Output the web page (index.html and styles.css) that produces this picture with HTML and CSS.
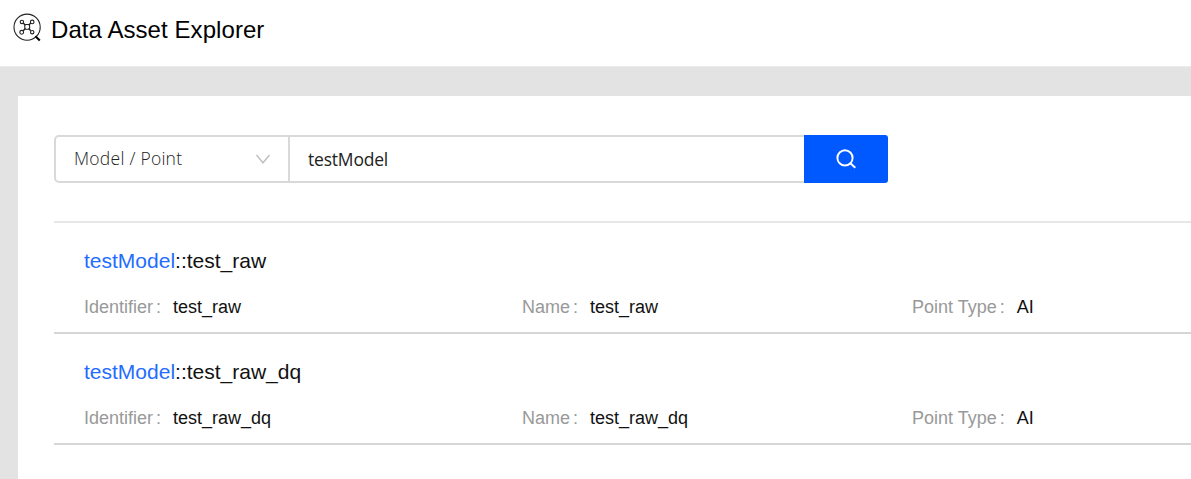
FILE: index.html
```html
<!DOCTYPE html>
<html lang="en">
<head>
<meta charset="utf-8">
<title>Data Asset Explorer</title>
<link rel="stylesheet" href="styles.css">
</head>
<body>
<header class="header">
  <svg class="logo" width="30" height="30" viewBox="0 0 30 30" fill="none" stroke="#222" stroke-width="1.1">
    <circle cx="14.1" cy="14.2" r="13.1"/>
    <path d="M10.2 10l2.2 2.2M17.8 10l-2.2 2.2M10.2 17.8l2.2-2.2M17.8 17.8l-2.2-2.2" stroke-width="1.4"/>
    <rect x="11.8" y="11.5" width="4.8" height="4.8" rx="1"/>
    <circle cx="8.9" cy="8.9" r="1.7"/>
    <circle cx="19.2" cy="8.9" r="1.8"/>
    <circle cx="8.7" cy="19.3" r="1.9"/>
    <circle cx="19.2" cy="19.2" r="1.7"/>
    <path d="M22.4 23.2l4.4 4.4" stroke="#000" stroke-width="2.1"/>
  </svg>
  <h1 class="title">Data Asset Explorer</h1>
</header>
<main class="panel">
  <form class="search">
    <div class="select">
      <span class="select-value">Model / Point</span>
      <svg width="16" height="12" viewBox="0 0 16 12" fill="none" stroke="#bfbfbf" stroke-width="1.4"><path d="M1.5 2L8 9.8l6.5-7.8"/></svg>
    </div>
    <div class="field"><span class="field-value">testModel</span></div>
    <button class="button" type="button" aria-label="Search">
      <svg width="22" height="22" viewBox="0 0 22 22" fill="none" stroke="#fff" stroke-width="1.9"><circle cx="10" cy="9.9" r="7.6"/><path d="M15.4 15.3l4.9 4.5"/></svg>
    </button>
  </form>
  <ul class="results">
    <li class="result">
      <h2 class="name"><a class="model">testModel</a>::test_raw</h2>
      <dl class="details">
        <div class="detail"><dt>Identifier<span class="colon">:</span></dt><dd>test_raw</dd></div>
        <div class="detail"><dt>Name<span class="colon">:</span></dt><dd>test_raw</dd></div>
        <div class="detail"><dt>Point Type<span class="colon">:</span></dt><dd>AI</dd></div>
      </dl>
    </li>
    <li class="result">
      <h2 class="name"><a class="model">testModel</a>::test_raw_dq</h2>
      <dl class="details">
        <div class="detail"><dt>Identifier<span class="colon">:</span></dt><dd>test_raw_dq</dd></div>
        <div class="detail"><dt>Name<span class="colon">:</span></dt><dd>test_raw_dq</dd></div>
        <div class="detail"><dt>Point Type<span class="colon">:</span></dt><dd>AI</dd></div>
      </dl>
    </li>
  </ul>
</main>
</body>
</html>
```

FILE: styles.css
```css
* { box-sizing: border-box; margin: 0; padding: 0; }
body {
  display: flex;
  flex-direction: column;
  height: 100vh;
  overflow: hidden;
  background: #e3e3e3;
  color: #111;
  font-family: "Liberation Sans", Arial, sans-serif;
}
.header {
  display: flex;
  align-items: flex-start;
  gap: 8px;
  height: 67px;
  padding: 13px 13px 0;
  background: #fff;
  border-bottom: 1px solid #ececec;
  flex: none;
}
.title { font-size: 24px; font-weight: 400; line-height: 28px; letter-spacing: 0.07px; padding-top: 3px; color: #000; }
.panel { flex: 1; margin: 29px 0 0 18px; padding: 39px 0 0 36px; background: #fff; }
.search { display: flex; width: 834px; height: 48px; }
.select, .field { display: flex; align-items: center; border: 2px solid #d9d9d9; font-family: "Open Sans", sans-serif; font-size: 17.5px; }
.select { width: 236px; justify-content: space-between; padding: 0 17px 0 18px; border-radius: 5px 0 0 5px; }
.select-value { padding-bottom: 2px; font-weight: 300; letter-spacing: 0.25px; color: #222; }
.field { flex: 1; margin-left: -2px; border-right: 0; padding: 0 18px; color: #222; }
.field-value { letter-spacing: -0.2px; }
.button { display: flex; align-items: center; justify-content: center; width: 84px; border: 0; border-radius: 0 3px 3px 0; background: #0058ff; }
.results { list-style: none; margin-top: 38px; border-top: 2px solid #e6e6e6; }
.result { height: 111px; padding: 26px 0 0 30px; border-bottom: 2px solid #d6d6d6; }
.name { font-size: 21px; font-weight: 400; line-height: 24px; }
.model { color: #1f6dff; }
.details { display: grid; grid-template-columns: 438px 390px 1fr; margin-top: 24px; font-size: 18px; line-height: 21px; }
.detail { display: flex; }
.detail dt { color: #999; margin-right: 12px; }
.colon { margin-left: 3px; }
```
